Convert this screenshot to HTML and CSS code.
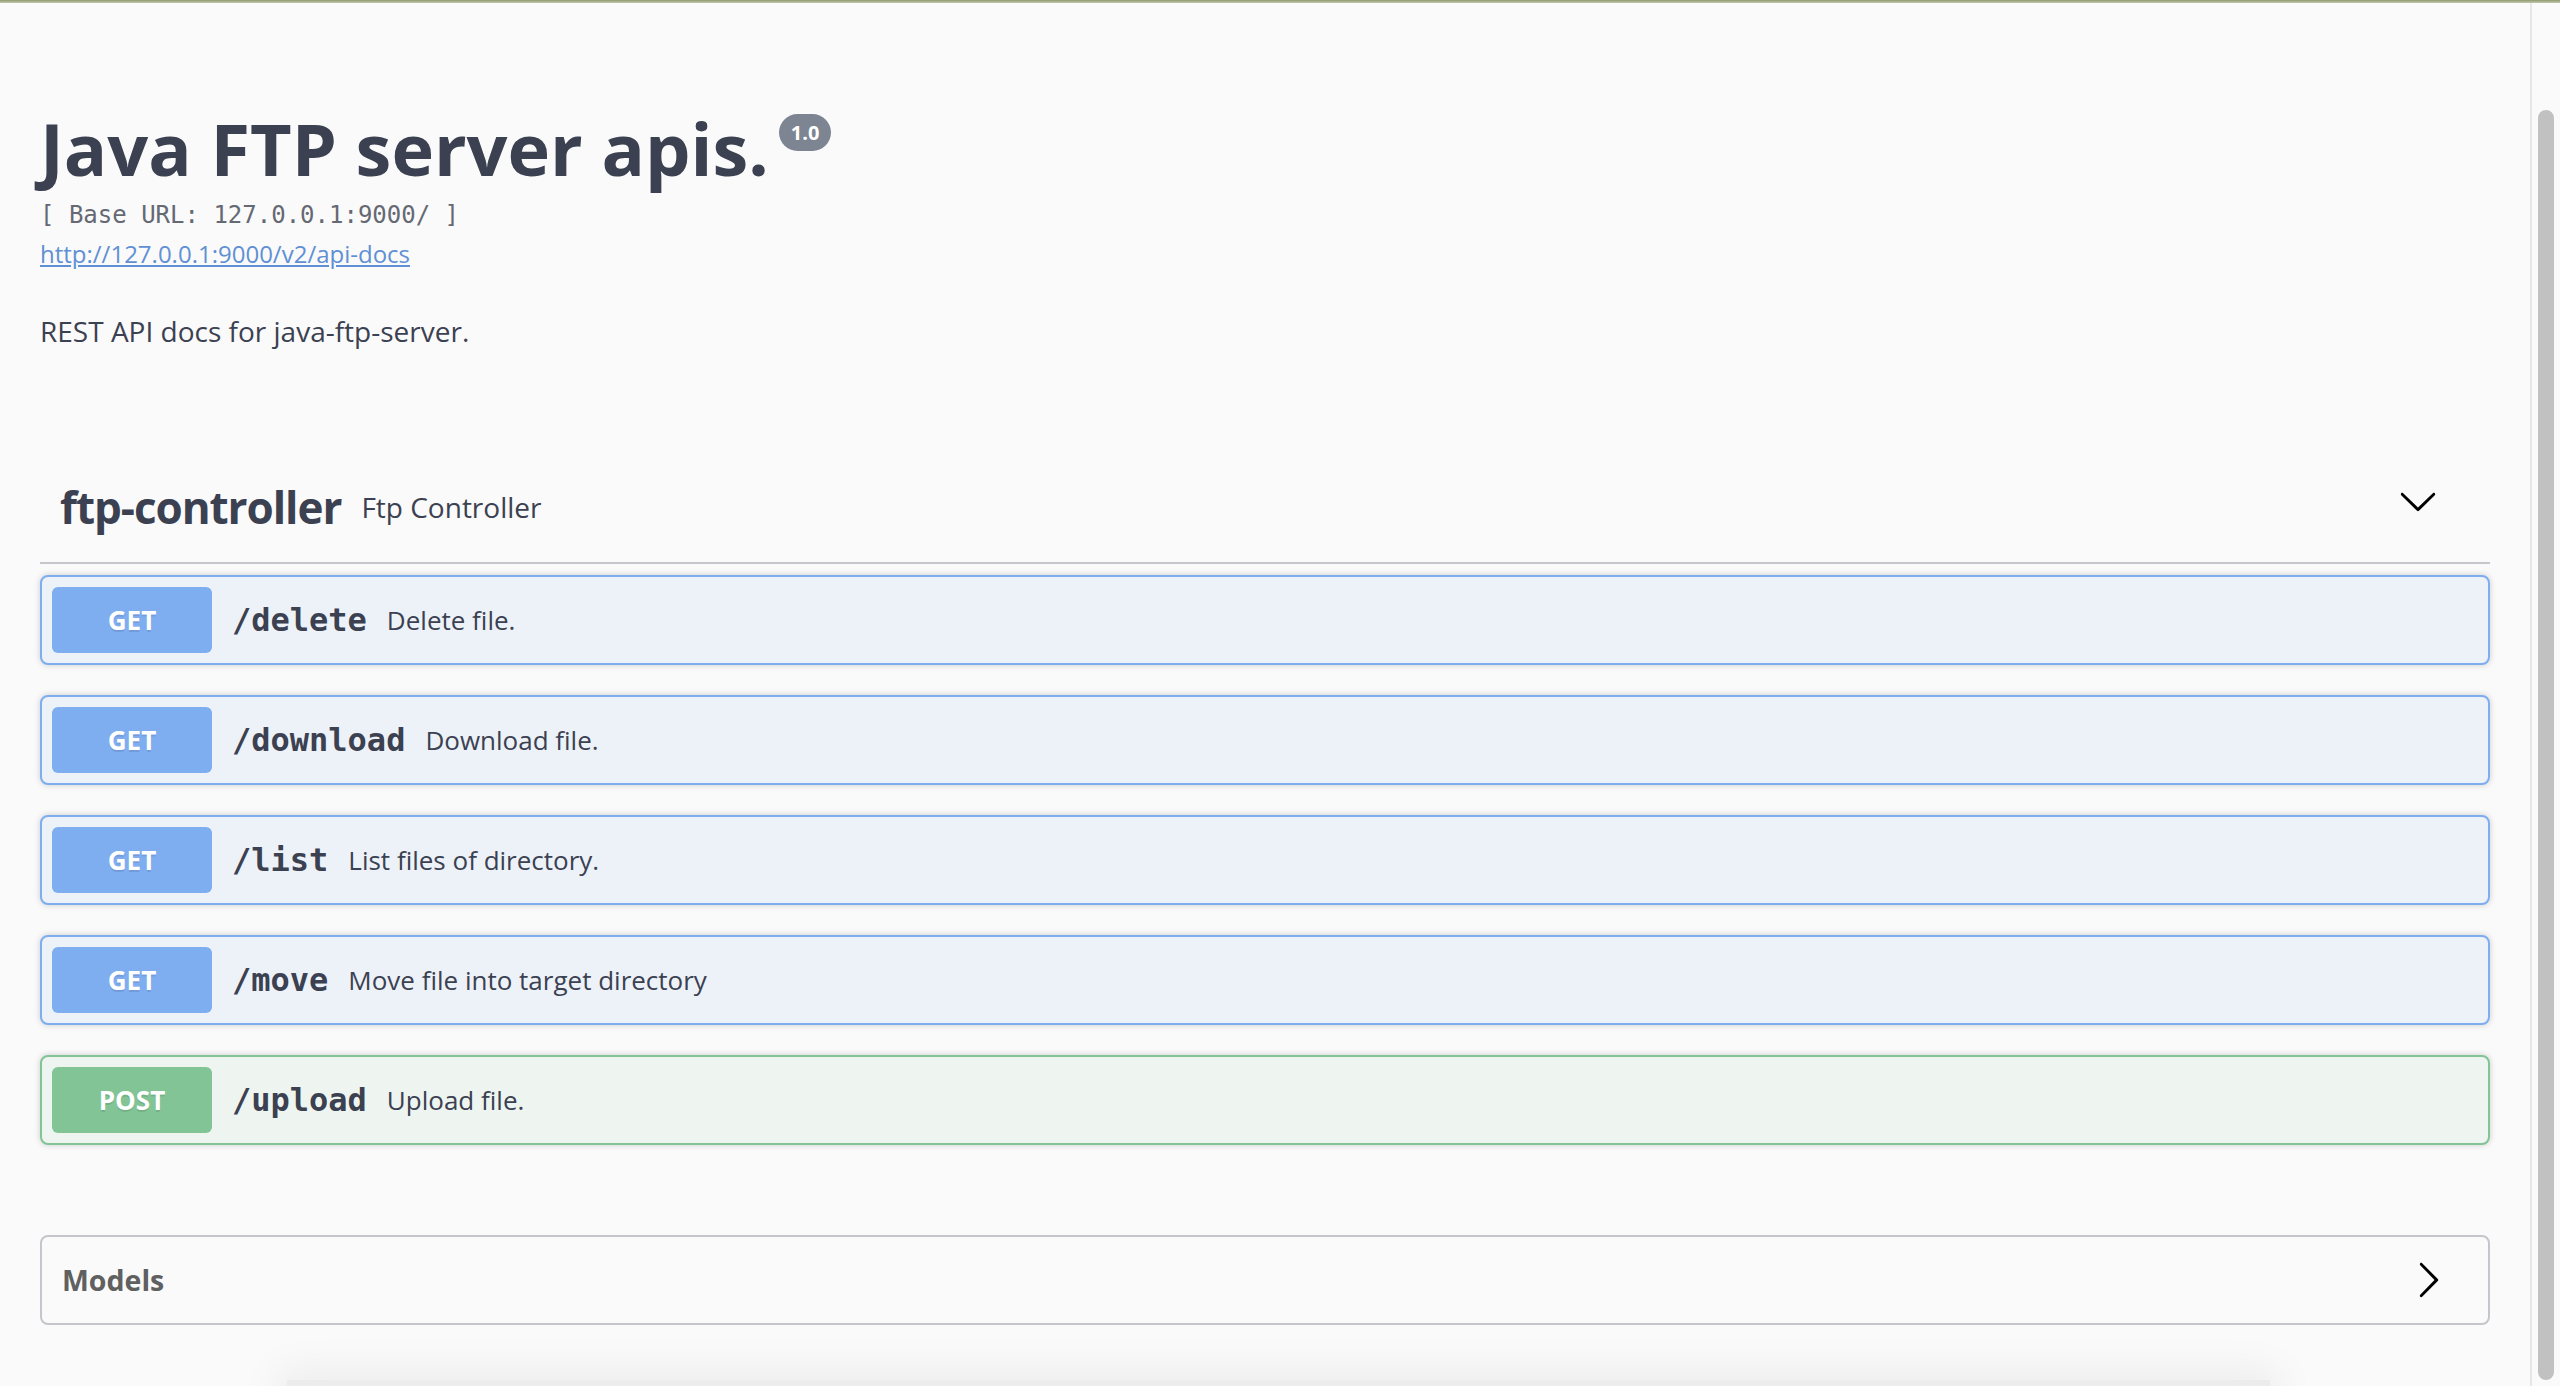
FILE: index.html
```html
<!DOCTYPE html>
<html lang="en">
<head>
<meta charset="utf-8">
<title>Swagger UI</title>
<link rel="stylesheet" href="styles.css">
</head>
<body>
<div class="topline"></div>
<div class="page">
  <main class="wrapper">
    <div class="info">
      <h2 class="title"><span>Java FTP server apis.</span><small class="version">1.0</small></h2>
      <div class="base-url">[ Base URL: 127.0.0.1:9000/ ]</div>
      <a class="spec-link" href="#">http://127.0.0.1:9000/v2/api-docs</a>
      <p class="description">REST API docs for java-ftp-server.</p>
    </div>

    <section class="tag-section">
      <h3 class="tag">
        <span class="tag-name">ftp-controller</span>
        <small class="tag-desc">Ftp Controller</small>
        <button class="expand" type="button">
          <svg width="40" height="40" viewBox="0 0 20 20"><path d="M17.418 6.109c.272-.268.709-.268.979 0s.271.701 0 .969l-7.908 7.83c-.27.268-.707.268-.979 0l-7.908-7.83c-.27-.268-.27-.701 0-.969.271-.268.709-.268.979 0L10 13.25l7.418-7.141z"/></svg>
        </button>
      </h3>
      <div class="opblocks">
        <div class="opblock get"><span class="method">GET</span><span class="path">/delete</span><span class="summary">Delete file.</span></div>
        <div class="opblock get"><span class="method">GET</span><span class="path">/download</span><span class="summary">Download file.</span></div>
        <div class="opblock get"><span class="method">GET</span><span class="path">/list</span><span class="summary">List files of directory.</span></div>
        <div class="opblock get"><span class="method">GET</span><span class="path">/move</span><span class="summary">Move file into target directory</span></div>
        <div class="opblock post"><span class="method">POST</span><span class="path">/upload</span><span class="summary">Upload file.</span></div>
      </div>
    </section>

    <section class="models">
      <h4 class="models-head">
        <span>Models</span>
        <svg width="40" height="40" viewBox="0 0 20 20"><path d="M13.25 10L6.109 2.58c-.268-.27-.268-.707 0-.979.268-.27.701-.27.969 0l7.830 7.908c.268.271.268.709 0 .979l-7.830 7.908c-.268.271-.701.27-.969 0-.268-.269-.268-.707 0-.979L13.25 10z"/></svg>
      </h4>
    </section>

    <div class="bottom-shadow"></div>
  </main>
  <div class="scrolltrack"><div class="thumb"></div></div>
</div>
</body>
</html>
```

FILE: styles.css
```css
html, body {
  margin: 0;
  padding: 0;
  background: #fafafa;
  overflow: hidden;
}

body {
  height: 1386px;
  font-family: "Open Sans", "Noto Sans", sans-serif;
  color: #3b4151;
}

.topline {
  height: 3px;
  background: linear-gradient(#8f9a70, #c3c8ab);
}

.page {
  display: flex;
  height: 1383px;
  overflow: hidden;
}

.wrapper {
  flex: 1;
  min-width: 0;
  padding: 0 40px;
  display: flex;
  flex-direction: column;
}

/* ---------- info ---------- */
.info {
  display: flex;
  flex-direction: column;
  padding-top: 96px;
  flex-shrink: 0;
}

.title {
  margin: 0;
  display: flex;
  align-items: flex-start;
  font-size: 72px;
  font-weight: 700;
  line-height: 98px;
  color: #3b4151;
}

.version {
  margin: 15px 0 0 10px;
  height: 37px;
  padding: 0 12px;
  border-radius: 19px;
  background: #7d8492;
  color: #fff;
  font-size: 20px;
  font-weight: 700;
  line-height: 37px;
}

.base-url {
  margin-top: 4px;
  font-family: "DejaVu Sans Mono", monospace;
  font-size: 24px;
  line-height: 28px;
  color: #656974;
  white-space: pre;
}

.spec-link {
  margin-top: 8px;
  align-self: flex-start;
  font-size: 24px;
  line-height: 33px;
  color: #6090d4;
  text-decoration: underline;
}

.description {
  margin: 42px 0 0;
  font-size: 28px;
  line-height: 38px;
}

/* ---------- tag ---------- */
.tag-section {
  flex-shrink: 0;
}

.tag {
  margin: 102px 0 11px;
  padding: 20px 40px 20px 20px;
  display: flex;
  align-items: center;
  border-bottom: 2px solid #c4c6cb;
  line-height: 70px;
  font-weight: 400;
  color: #3b4151;
}

.tag-name {
  font-size: 44px;
  font-weight: 700;
  letter-spacing: -1.05px;
}

.tag-desc {
  flex: 1;
  padding: 0 20px;
  font-size: 28px;
  line-height: 38px;
}

.expand {
  border: 0;
  background: none;
  padding: 0 12px;
  margin: 0 0 12px;
  display: flex;
}

/* ---------- operations ---------- */
.opblocks {
  display: flex;
  flex-direction: column;
  gap: 30px;
}

.opblock {
  display: flex;
  align-items: center;
  padding: 10px;
  border: 2px solid;
  border-radius: 8px;
  box-shadow: 0 0 6px rgba(0, 0, 0, .19);
}

.opblock.get {
  border-color: #7eadf0;
  background: #edf2f9;
}

.opblock.post {
  border-color: #82c496;
  background: #eef5f0;
}

.method {
  width: 160px;
  height: 66px;
  flex-shrink: 0;
  display: flex;
  align-items: center;
  justify-content: center;
  border-radius: 6px;
  color: #fff;
  font-size: 26px;
  font-weight: 700;
  text-shadow: 0 2px 0 rgba(0, 0, 0, .1);
}

.get .method { background: #7eadf0; }
.post .method { background: #82c496; }

.path {
  padding: 0 20px;
  font-family: "DejaVu Sans Mono", monospace;
  font-size: 32px;
  font-weight: 700;
  color: #3b4151;
}

.summary {
  font-size: 26px;
  color: #3b4151;
}

/* ---------- models ---------- */
.models {
  margin-top: 90px;
  border: 2px solid #c4c6cb;
  border-radius: 8px;
  flex-shrink: 0;
}

.models-head {
  margin: 0;
  height: 86px;
  padding: 0 40px 0 20px;
  display: flex;
  align-items: center;
  justify-content: space-between;
  font-size: 28.5px;
  font-weight: 700;
  color: #606060;
}

.bottom-shadow {
  margin: 55px 220px 0 247px;
  height: 30px;
  flex-shrink: 0;
  background: #ececec;
  box-shadow: 0 0 40px 10px rgba(0, 0, 0, .06);
}

/* ---------- scrollbar ---------- */
.scrolltrack {
  width: 22px;
  flex-shrink: 0;
  border-left: 2px solid #e6e6e6;
  padding-left: 6px;
  background: #fafafa;
}

.thumb {
  width: 16px;
  height: 1270px;
  margin-top: 107px;
  border-radius: 8px;
  background: #c1c1c1;
}
```
